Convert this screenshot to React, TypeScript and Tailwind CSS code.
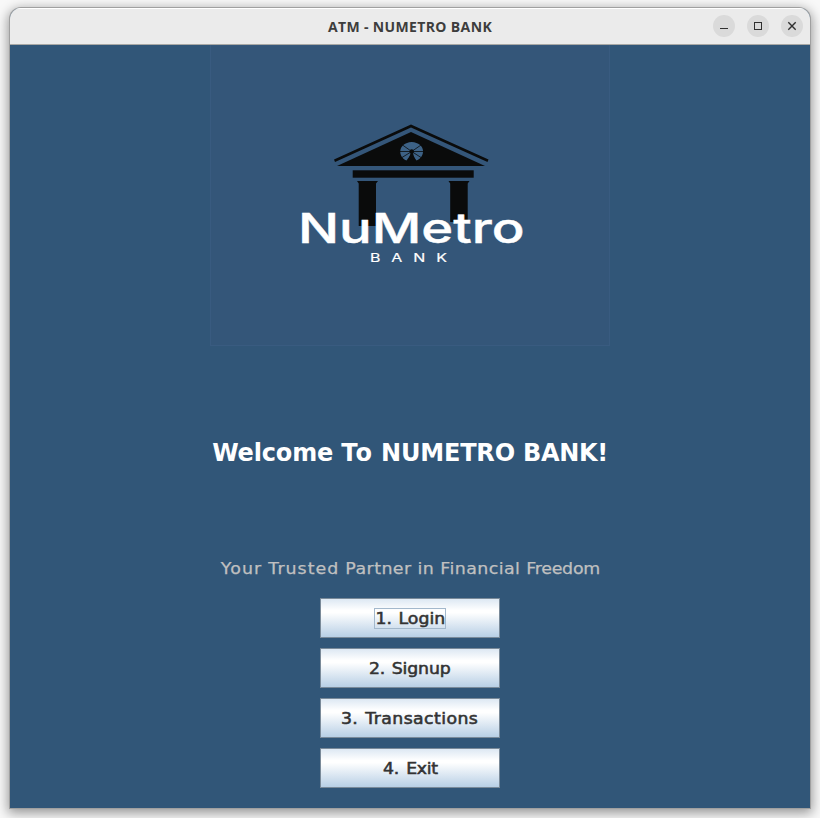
import React from 'react';

function BankLogo() {
  return (
    <svg width="400" height="301" viewBox="210 45 400 301" className="block">
      <rect x="210.5" y="45" width="399" height="300.5" fill="#345679" stroke="#395b80" />
      <g fill="#0a0b0b">
        <path d="M334 159.5 L411 124.5 L488.5 159.5 L487.5 162 L411 127.5 L335 162 Z" />
        <path d="M337 166 L411 132 L485 166 Z" />
        <rect x="352.7" y="170.3" width="121" height="7.4" />
        <path d="M357 181 H378 L376 183.5 V226 H358.7 V183.5 Z" />
        <path d="M448.5 181 H469.5 L467.7 183.5 V222 H450.2 V183.5 Z" />
      </g>
      <path d="M406.5 160.5 C397.5 157 397.5 143 411.7 142 C426 143 426 157 416.5 160.5 L412.5 155 H410.5 Z" fill="#3d6286" />
      <path d="M411.7 151.5 L402.5 145 M411.7 151.5 L421 145 M400 151.5 H423.5 M411.7 151.5 L402 157.5 M411.7 151.5 L421 157.5" stroke="#0a0b0b" strokeWidth="0.8" />
      <circle cx="411.7" cy="151.5" r="2.2" fill="#0a0b0b" />
      <path d="M411 152 L408 161 H415.5 L412.5 152 Z" fill="#0a0b0b" />
      <text x="298" y="243" fontSize="41" fontWeight="500" textLength="226.5" lengthAdjust="spacingAndGlyphs" fill="#fff" stroke="#fff" strokeWidth="0.4" fontFamily="Inter, sans-serif">NuMetro</text>
      <text transform="translate(370 261.5) scale(1.3 1)" fontSize="12.3" letterSpacing="8.4" fill="#fff" stroke="#fff" strokeWidth="0.15" fontFamily="Inter, sans-serif">BANK</text>
    </svg>
  );
}

function WindowControl({ children }: { children: React.ReactNode }) {
  return (
    <span className="flex h-[22px] w-[22px] items-center justify-center rounded-full bg-[#dadada]">
      <svg width="22" height="22" viewBox="0 0 22 22" fill="none" stroke="#303030">{children}</svg>
    </span>
  );
}

function MenuButton({ children, focused = false, spacing }: { children: string; focused?: boolean; spacing: string }) {
  return (
    <button className="flex h-10 w-[180px] items-center justify-center border border-[#7a8a99] bg-[linear-gradient(#dde8f3_0%,#ffffff_30%,#ffffff_36%,#b8cfe5_100%)] font-['DejaVu_Sans',sans-serif] text-[16px] leading-5 text-[#333333] [-webkit-text-stroke:0.55px_#333333]">
      <span className={`flex h-[21px] items-center justify-center whitespace-pre border ${focused ? 'w-[72px] border-[#a3b8cc]' : 'border-transparent'}`}>
        <span className={`block scale-x-[1.08] pt-[2px] ${spacing}`}>{children}</span>
      </span>
    </button>
  );
}

export default function App() {
  return (
    <div className="h-[818px] w-[820px] overflow-hidden bg-[#f8f8f8] pl-[10px] pt-2">
      <div className="h-[800px] w-[800px] overflow-hidden rounded-t-[11px] bg-[#315678] shadow-[0_0_0_1px_#a0a0a0,0_3px_12px_2px_rgba(0,0,0,0.4)]">
        <header className="grid h-[37px] grid-cols-[1fr_auto_1fr] items-center border-b border-t border-b-[#a8a8a5] border-t-white bg-[#ebebeb] pl-[7px] pr-[7px]">
          <span />
          <h1 className="pt-px font-['Open_Sans',sans-serif] text-[14px] font-bold leading-5 tracking-[0.36px] text-[#3d3d3d]">ATM - NUMETRO BANK</h1>
          <div className="-mt-px flex justify-end gap-3">
            <WindowControl><path d="M7 13.5 H15" /></WindowControl>
            <WindowControl><rect x="7.5" y="7.5" width="7" height="7" /></WindowControl>
            <WindowControl><path d="M7.3 7.3 L14.7 14.7 M14.7 7.3 L7.3 14.7" strokeWidth="1.4" /></WindowControl>
          </div>
        </header>
        <main className="flex flex-col items-center">
          <BankLogo />
          <h2 className="mt-[92px] whitespace-nowrap font-['DejaVu_Sans',sans-serif] text-[24px] font-bold leading-[30px] tracking-[-0.17px] text-white">Welcome <span className="tracking-[0.9px]">To</span> NUMETRO <span className="tracking-[-0.35px]">BANK!</span></h2>
          <p className="mt-[91px] scale-x-[1.087] whitespace-nowrap font-['DejaVu_Sans',sans-serif] text-[16px] leading-5 tracking-[0.4px] text-[#c0c0c0] [-webkit-text-stroke:0.25px_#c0c0c0]"><span className="tracking-[1px]">Your</span> <span className="tracking-[0.95px]">Trusted</span> Partner in Financial <span className="tracking-[-0.25px]">Freedom</span></p>
          <nav className="mt-[19px] flex flex-col gap-[10px]">
            <MenuButton focused spacing="[word-spacing:1px] pl-px">1. Login</MenuButton>
            <MenuButton spacing="tracking-[-0.1px] [word-spacing:1px]">2. Signup</MenuButton>
            <MenuButton spacing="tracking-[0.4px] [word-spacing:1px]">3. Transactions</MenuButton>
            <MenuButton spacing="tracking-[-0.3px] [word-spacing:2px] pl-px">4. Exit</MenuButton>
          </nav>
        </main>
      </div>
    </div>
  );
}
